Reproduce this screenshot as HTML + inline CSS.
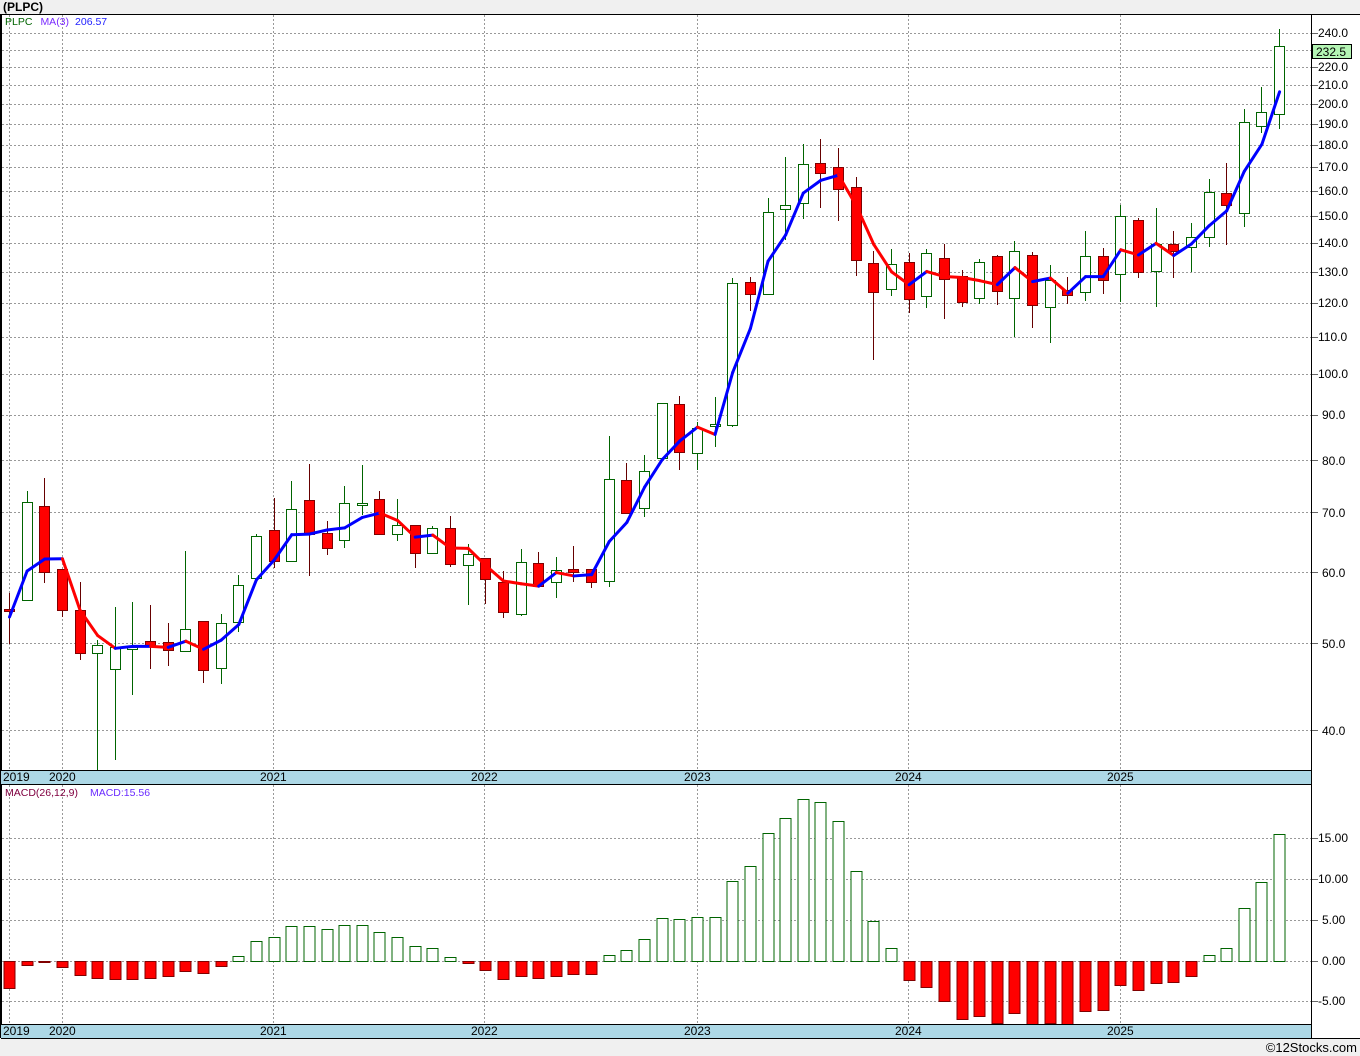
<!DOCTYPE html>
<html><head><meta charset="utf-8"><style>
html,body{margin:0;padding:0;background:#f0f0f0;}
body{width:1360px;height:1056px;position:relative;overflow:hidden;font-family:"Liberation Sans",sans-serif;}
svg{position:absolute;left:0;top:0;}
text{font-family:"Liberation Sans",sans-serif;}
</style></head><body>
<svg id="s" width="1360" height="1056" xmlns="http://www.w3.org/2000/svg">
<rect x="0" y="0" width="1360" height="1056" fill="#f0f0f0"/>
<rect x="1" y="14" width="1310" height="1024" fill="#fff"/>
<g id="grid"></g>
<g id="bars"></g>
<g id="cand"></g>
<g id="ma"></g>
<line x1="1" y1="14.5" x2="1360" y2="14.5" stroke="#000"/>
<line x1="1" y1="14" x2="1" y2="1038" stroke="#000" stroke-width="2"/>
<line x1="1311.5" y1="14" x2="1311.5" y2="1038" stroke="#000"/>
<rect x="1" y="770" width="1310" height="14" fill="#add8e6"/>
<line x1="1" y1="770.5" x2="1311" y2="770.5" stroke="#000"/>
<line x1="1" y1="784.5" x2="1360" y2="784.5" stroke="#000"/>
<rect x="1" y="1024" width="1310" height="14" fill="#add8e6"/>
<line x1="1" y1="1024.5" x2="1311" y2="1024.5" stroke="#000"/>
<line x1="1" y1="1038.5" x2="1360" y2="1038.5" stroke="#000"/>
<rect x="1312" y="15" width="48" height="1023" fill="#fff"/>
<g id="ticks"></g>
<text x="3" y="11" font-size="12" font-weight="bold" fill="#000">(PLPC)</text>
<text x="5" y="25" font-size="10.5"><tspan fill="#006400">PLPC</tspan><tspan fill="#7a2bff" dx="8">MA(3)</tspan><tspan fill="#2020ff" dx="6">206.57</tspan></text>
<text x="5" y="796" font-size="10.5"><tspan fill="#800040">MACD(26,12,9)</tspan><tspan fill="#6a2bff" dx="12">MACD:15.56</tspan></text>
<g font-size="12" fill="#000">
<text x="3" y="781">2019</text><text x="49" y="781">2020</text><text x="260" y="781">2021</text><text x="471" y="781">2022</text><text x="684" y="781">2023</text><text x="895" y="781">2024</text><text x="1107" y="781">2025</text>
<text x="3" y="1035">2019</text><text x="49" y="1035">2020</text><text x="260" y="1035">2021</text><text x="471" y="1035">2022</text><text x="684" y="1035">2023</text><text x="895" y="1035">2024</text><text x="1107" y="1035">2025</text>
</g>
<g font-size="12" fill="#000">
<text x="1318" y="37">240.0</text><text x="1318" y="71">220.0</text><text x="1318" y="89">210.0</text><text x="1318" y="108">200.0</text><text x="1318" y="128">190.0</text><text x="1318" y="149">180.0</text><text x="1318" y="171">170.0</text><text x="1318" y="195">160.0</text><text x="1318" y="220">150.0</text><text x="1318" y="247">140.0</text><text x="1318" y="276">130.0</text><text x="1318" y="307">120.0</text><text x="1318" y="341">110.0</text><text x="1318" y="378">100.0</text><text x="1322" y="419">90.0</text><text x="1322" y="465">80.0</text><text x="1322" y="517">70.0</text><text x="1322" y="577">60.0</text><text x="1322" y="648">50.0</text><text x="1322" y="735">40.0</text>
<text x="1318" y="842">15.00</text><text x="1318" y="883">10.00</text><text x="1322" y="924">5.00</text><text x="1322" y="965">0.00</text><text x="1318" y="1005">-5.00</text>
</g>
<rect x="1312.5" y="44.5" width="39" height="14" fill="#b4f5b4" stroke="#000"/>
<text x="1316" y="56" font-size="12" fill="#000">232.5</text>
<text x="1357" y="1052" font-size="13" fill="#000" text-anchor="end">©12Stocks.com</text>
</svg>
<script>
var NS="http://www.w3.org/2000/svg";
function el(g,t,a){var e=document.createElementNS(NS,t);for(var k in a)e.setAttribute(k,a[k]);document.getElementById(g).appendChild(e);return e;}
var py=[33,49.6,66.8,85,104,124,145,167,191,216,243,271.5,303,336.5,374,414.5,460,512,572,643,730];
py.forEach(function(y){y=Math.round(y)+.5;el("grid","line",{x1:2,y1:y,x2:1311,y2:y,stroke:"#999","stroke-dasharray":"2,2"});el("ticks","line",{x1:1312,y1:y,x2:1318,y2:y,stroke:"#666"});});
[838,879,920,961,1001].forEach(function(y){y+=.5;el("grid","line",{x1:2,y1:y,x2:1311,y2:y,stroke:"#999","stroke-dasharray":"2,2"});el("ticks","line",{x1:1312,y1:y,x2:1318,y2:y,stroke:"#666"});});
[9,62,273,484,697,908,1120].forEach(function(x){x+=.5;el("grid","line",{x1:x,y1:15,x2:x,y2:770,stroke:"#999","stroke-dasharray":"2,2"});el("grid","line",{x1:x,y1:785,x2:x,y2:1024,stroke:"#999","stroke-dasharray":"2,2"});});
var D=[[593,644,609,611,0],[491,600,502,600,1],[478,583,506,572,0],[569,617,569,610,0],[582,660,610,653,0],[640,770,645,653,1],[607,760,647,669,1],[602,695,647,649,1],[605,669,641,645,0],[623,666,642,650,0],[551,651,629,651,1],[621,683,621,670,0],[614,684,623,668,1],[575,632,585,622,1],[534,578,536,578,1],[498,568,530,561,0],[481,561,509,561,1],[464,576,500,534,0],[521,555,533,548,0],[486,548,503,540,1],[465,515,503,505,1],[491,534,499,534,0],[499,541,525,534,1],[525,568,525,553,0],[526,553,528,553,1],[516,567,528,564,0],[544,605,554,565,1],[558,604,558,579,0],[571,618,582,612,0],[549,616,562,614,1],[552,586,563,586,0],[557,598,570,582,1],[546,582,569,572,0],[569,588,569,582,0],[436,587,479,581,1],[463,513,480,513,0],[455,517,471,508,1],[403,458,403,458,1],[396,470,404,452,0],[422,470,428,453,1],[397,447,424,426,1],[278,427,283,425,1],[277,311,282,294,0],[198,294,212,294,1],[157,240,205,209,1],[144,219,164,203,1],[139,208,163,173,0],[148,221,167,189,0],[177,276,187,260,0],[251,360,263,292,0],[249,296,264,289,1],[253,313,262,299,0],[249,308,253,296,1],[244,319,258,279,0],[270,307,276,302,0],[259,304,262,298,1],[255,305,256,291,0],[241,337,251,298,1],[252,328,255,305,0],[265,343,280,307,1],[277,304,290,295,0],[231,301,256,292,1],[248,294,256,280,0],[205,302,216,274,1],[218,278,220,272,0],[208,307,244,271,1],[231,278,244,251,0],[223,272,237,247,1],[179,247,192,237,1],[163,245,193,205,0],[109,227,122,213,1],[87,133,112,126,1],[29,129,46,114,1]];
var M=[988,965,962,967,975,978,979,979,978,976,971,973,966,956,941,937,926,926,929,925,925,932,937,946,948,957,963,970,979,976,978,976,974,974,955,950,939,918,919,917,917,881,866,833,818,799,802,821,871,921,948,980,987,1001,1019,1016,1023,1013,1025,1023,1025,1011,1010,985,990,983,982,976,955,948,908,882,834];
function X(i){return 9+i*17.64;}
function P(y){return 240*Math.exp((33-y)/389);}
function Y(p){return 33+389*Math.log(240/p);}
var closes=[],ma=[];
D.forEach(function(d,i){
 var x=Math.round(X(i));
 var up=d[4];
 el("cand","line",{x1:x+.5,y1:d[0],x2:x+.5,y2:d[1],stroke:up?"#006400":"#660000","stroke-width":1});
 var h=Math.max(d[3]-d[2],1);
 el("cand","rect",{x:x-4.5,y:d[2]+.5,width:10,height:h,fill:up?"#fff":"#ff0000",stroke:up?"#006400":"#800000","stroke-width":1});
 closes.push(P(up?d[2]:d[3]));
 if(i==0)ma.push(617);else if(i==1)ma.push(571);
 else ma.push(Y((closes[i]+closes[i-1]+closes[i-2])/3));
 var m=M[i],mu=m<961;
 var top=mu?m:961,bh=Math.max(Math.abs(m-961),1);
 el("bars","rect",{x:x-5,y:top+.5,width:11,height:bh,fill:mu?"#fff":"#ff0000",stroke:mu?"#006400":"#800000","stroke-width":1});
});
for(var i=1;i<ma.length;i++){
 el("ma","line",{x1:X(i-1)+.5,y1:ma[i-1],x2:X(i)+.5,y2:ma[i],stroke:ma[i]<=ma[i-1]?"#0000ff":"#ff0000","stroke-width":3,"stroke-linecap":"round"});
}
</script>
</body></html>
